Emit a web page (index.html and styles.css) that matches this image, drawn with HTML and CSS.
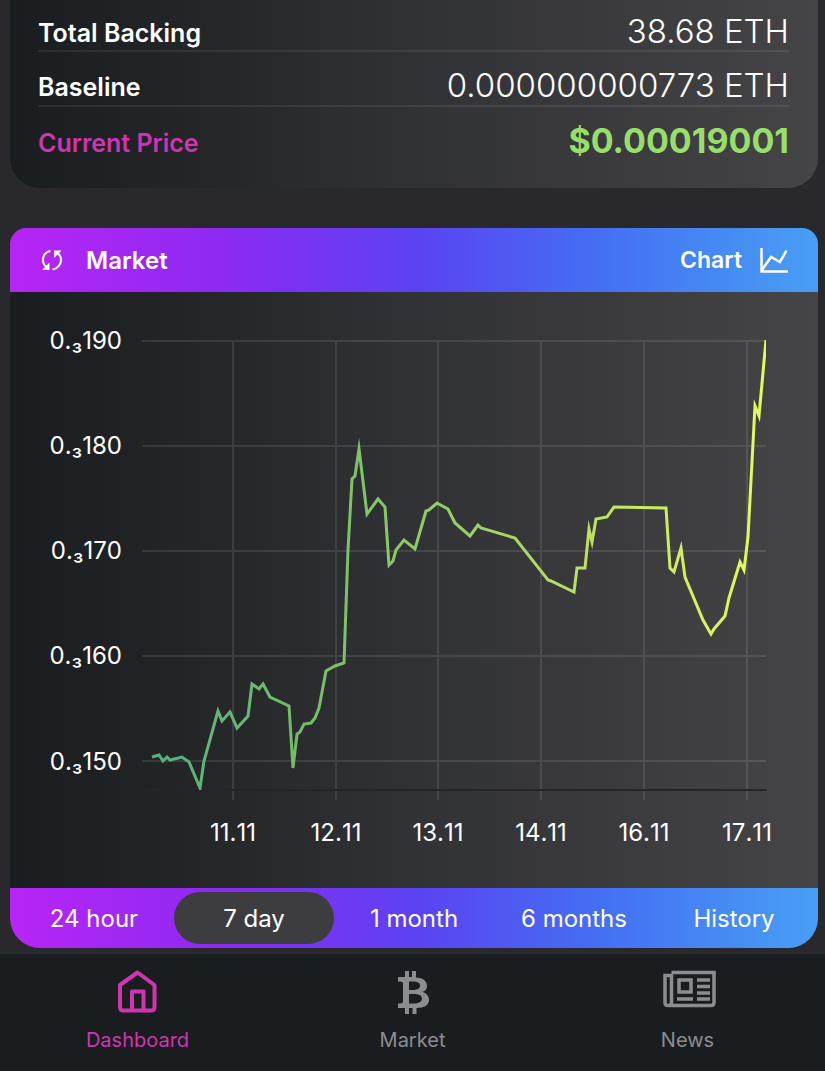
FILE: index.html
```html
<!DOCTYPE html>
<html lang="en">
<head>
    <meta charset="UTF-8">
    <meta name="viewport" content="width=device-width, initial-scale=1.0">
    <title>Dashboard</title>
    <link rel="stylesheet" href="styles.css">
</head>
<body>
    <main class="content">
        <dl class="stats">
            <div class="stat">
                <dt>Total Backing</dt>
                <dd>38.68 ETH</dd>
            </div>
            <div class="stat">
                <dt>Baseline</dt>
                <dd>0.000000000773 ETH</dd>
            </div>
            <div class="stat price">
                <dt>Current Price</dt>
                <dd>$0.00019001</dd>
            </div>
        </dl>

        <section class="market">
            <div class="market-header">
                <button class="header-button" type="button">
                    <svg class="refresh-icon" viewBox="0 0 22 22" aria-hidden="true">
                        <path d="M10.500 2C6 3 3 6.500 3 11C3 14 4.500 16.500 6.500 18M12.500 20.500C17.500 19.500 21 15.500 21 11C21 8 19.500 5.500 17.500 4"/>
                        <path class="fill" d="M2 21H9.500V13.500ZM21.500 1.500H14V9Z"/>
                    </svg>
                    <span>Market</span>
                </button>
                <a class="chart-link" href="#chart">
                    <span>Chart</span>
                    <svg class="chart-icon" viewBox="0 0 28 25" aria-hidden="true">
                        <path d="M1.500 0V23.500H28M2 22L11 9L20 14L26.500 2.500"/>
                    </svg>
                </a>
            </div>

            <svg class="chart" id="chart" viewBox="10 292 808 596" role="img" aria-label="Price chart">
                <defs>
                    <linearGradient id="line" gradientUnits="userSpaceOnUse" x1="152" y1="0" x2="766" y2="0">
                        <stop offset="0" stop-color="#5aae80"/>
                        <stop offset="0.25" stop-color="#74bd68"/>
                        <stop offset="0.5" stop-color="#98cf65"/>
                        <stop offset="0.8" stop-color="#cbe960"/>
                        <stop offset="1" stop-color="#e2fb5c"/>
                    </linearGradient>
                    <clipPath id="plot">
                        <rect x="142" y="340" width="624" height="450"/>
                    </clipPath>
                </defs>
                <path class="grid" d="M142 341H766M142 446H766M142 551H766M142 656H766M142 761H766M233 340V800M336 340V800M438 340V800M541 340V800M644 340V800M747 340V800"/>
                <path class="axis" d="M142 790H767"/>
                <polyline class="price-line" clip-path="url(#plot)" points="152,757 159,755 163,761 167,757 170,760 182,757 189,762 200,788 204,761 218,711 222,721 230,712 237,728 248,716 252,684 259,689 263,684 270,697 289,706 293,768 297,734 300,732 304,724 311,723 315,718 319,708 326,671 335,666 344,663 348,550 352,479 355,476 359,449 367,514 378,499 385,507 389,565 393,561 396,550 404,540 415,549 426,511 429,510 437,503 448,509 455,523 470,536 478,525 481,528 515,538 548,580 551,581 574,592 577,568 585,568 589,529 592,542 596,519 607,517 614,507 666,508 670,568 674,572 681,548 685,577 703,620 711,634 714,629 725,616 729,598 740,562 744,570 748,537 755,406 759,416 766,340"/>
                <g class="y-labels">
                    <text x="122" y="349">0.₃190</text>
                    <text x="122" y="454">0.₃180</text>
                    <text x="122" y="559">0.₃170</text>
                    <text x="122" y="664">0.₃160</text>
                    <text x="122" y="770">0.₃150</text>
                </g>
                <g class="x-labels">
                    <text x="233" y="841">11.11</text>
                    <text x="336" y="841">12.11</text>
                    <text x="438" y="841">13.11</text>
                    <text x="541" y="841">14.11</text>
                    <text x="644" y="841">16.11</text>
                    <text x="747" y="841">17.11</text>
                </g>
            </svg>

            <div class="ranges">
                <button class="range" type="button">24 hour</button>
                <button class="range active" type="button">7 day</button>
                <button class="range" type="button">1 month</button>
                <button class="range" type="button">6 months</button>
                <button class="range" type="button">History</button>
            </div>
        </section>
    </main>

    <nav class="tab-bar">
        <a class="tab active" href="#dashboard">
            <svg class="tab-icon" viewBox="0 0 56 44" aria-hidden="true">
                <path class="stroke" d="M10 15L27.500 2.500L44.500 15V37Q44.500 40.500 41 40.500H13.500Q10 40.500 10 37ZM22 40.500V21.500H33.500V40.500"/>
            </svg>
            <span>Dashboard</span>
        </a>
        <a class="tab" href="#market">
            <svg class="tab-icon" viewBox="0 0 56 44" aria-hidden="true">
                <path fill-rule="evenodd" d="M13 7H20V1H24V7H27V1H31V7.500C38 8 42 11 42 16C42 19 40.500 21 37.500 22C41.500 23 44 26 44 30C44 35 39.500 38 31.500 38V44H27.500V38H24V44H20V38H13V33.500H15.500Q18 33.500 18 31.500V13.500Q18 11.500 15.500 11.500H13ZM24 11.500V20H27.500C32.500 20 35 18.500 35 15.500C35 12.500 32.500 11.500 28 11.500ZM24 24V33.500H28.500C33.500 33.500 37 32 37 28.500C37 25.500 34 24 29 24Z"/>
            </svg>
            <span>Market</span>
        </a>
        <a class="tab" href="#news">
            <svg class="tab-icon" viewBox="0 0 56 44" aria-hidden="true">
                <path class="lines" d="M11.500 2.500H54V32.500Q54 35.500 51 35.500H8Q5 35.500 5 32.500V5.500H11.500V32.500Q11.500 35.500 8.500 35.500"/>
                <path class="lines" d="M19 10H31V22H19ZM17 29H33M37 10H50M37 16.500H50M37 23H50M37 29H50"/>
            </svg>
            <span>News</span>
        </a>
    </nav>
</body>
</html>
```

FILE: styles.css
```css
* {
    box-sizing: border-box;
}

body {
    margin: 0;
    min-height: 100vh;
    display: flex;
    flex-direction: column;
    font-family: Inter, "Liberation Sans", sans-serif;
    background-color: #29282c;
    color: #fff;
}

a {
    color: inherit;
    text-decoration: none;
}

button {
    border: 0;
    padding: 0;
    background: none;
    color: inherit;
    font: inherit;
    cursor: pointer;
}

.content {
    padding: 0 7px 6px 10px;
}

.stats,
.market {
    background: linear-gradient(90deg, #1a1d1f 0%, #242628 25%, #313235 50%, #3b3b3e 75%, #454547 100%);
    border-radius: 0 0 30px 30px;
}

.stats {
    margin: 0 0 40px;
    padding: 0 29px 26px 28px;
}

.stat {
    display: flex;
    justify-content: space-between;
    align-items: center;
    height: 55px;
    padding-top: 13px;
    border-bottom: 2px solid rgba(255, 255, 255, 0.08);
}

.stat:first-child {
    height: 52px;
    padding-top: 11px;
}

.stat:last-child {
    border-bottom: 0;
}

.stat dt {
    padding-top: 4px;
    font-size: 25px;
    line-height: 32px;
    font-weight: 600;
}

.stat dd {
    margin: 0;
    font-size: 33px;
    line-height: 40px;
    font-weight: 300;
}

.price dt {
    color: #cf35b0;
}

.price dd {
    color: #97de6b;
    font-size: 34px;
    font-weight: 700;
}

.market {
    border-radius: 16px 16px 30px 30px;
    overflow: hidden;
}

.market-header,
.ranges {
    display: flex;
    background: linear-gradient(90deg, #b725f5 0%, #8c2af2 27%, #5b42f2 50%, #446ff3 73%, #489ff4 100%);
}

.market-header {
    height: 64px;
    padding: 0 30px;
    justify-content: space-between;
    align-items: center;
    font-size: 24px;
    font-weight: 600;
}

.header-button,
.chart-link {
    display: flex;
    align-items: center;
}

.header-button {
    gap: 24px;
}

.chart-link {
    gap: 18px;
    font-size: 23px;
}

.refresh-icon {
    width: 22px;
    height: 22px;
    fill: none;
    stroke: #fff;
    stroke-width: 2;
}

.refresh-icon .fill {
    fill: #fff;
    stroke: none;
}

.chart-icon {
    width: 28px;
    height: 25px;
    fill: none;
    stroke: #fff;
    stroke-width: 2.5;
}

.chart {
    display: block;
    width: 100%;
    height: auto;
}

.grid {
    fill: none;
    stroke: rgba(255, 255, 255, 0.1);
    stroke-width: 2;
}

.axis {
    stroke: #252528;
    stroke-width: 2;
}

.price-line {
    fill: none;
    stroke: url(#line);
    stroke-width: 3;
    stroke-miterlimit: 10;
}

.chart text {
    fill: #fff;
    font-size: 24px;
    font-kerning: none;
}

.y-labels {
    text-anchor: end;
}

.x-labels {
    text-anchor: middle;
}

.ranges {
    padding: 4px;
}

.range {
    flex: 1;
    height: 52px;
    border-radius: 26px;
    font-size: 24px;
}

.range.active {
    background-color: #3d3d40;
}

.tab-bar {
    flex: 1;
    display: flex;
    padding: 16px 0;
    background-color: #1a1d20;
}

.tab {
    flex: 1;
    display: flex;
    flex-direction: column;
    align-items: center;
    gap: 13px;
    color: #8c8d8f;
    font-size: 20px;
    line-height: 26px;
}

.tab.active {
    color: #cf35b0;
}

.tab-icon {
    width: 56px;
    height: 44px;
    fill: currentColor;
}

.tab-icon .stroke,
.tab-icon .lines {
    fill: none;
    stroke: currentColor;
    stroke-width: 4;
    stroke-linejoin: round;
}

.tab-icon .lines {
    stroke-width: 3.5;
    stroke-linejoin: miter;
}
```
